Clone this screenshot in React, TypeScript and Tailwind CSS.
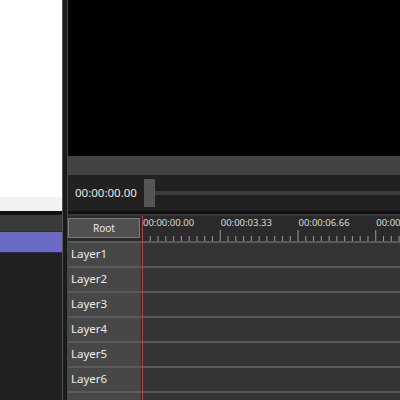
import React from "react";

const rows = ["Layer1", "Layer2", "Layer3", "Layer4", "Layer5", "Layer6", "Layer7", "Layer8"];
const labels = ["00:00:00.00", "00:00:03.33", "00:00:06.66", "00:00:09.99"];

function Ticks() {
  const ticks: React.ReactNode[] = [];
  const step = 77.75 / 10;
  for (let i = 0; i < 40; i++) {
    const x = 0.5 + i * step;
    const major = i % 10 === 0;
    ticks.push(
      <line key={i} x1={x} x2={x} y1={major ? 1 : 7} y2={12} stroke="#9a9a9a" strokeWidth={1} />
    );
  }
  return (
    <svg width="258" height="12" className="block">
      {ticks}
    </svg>
  );
}

export default function App() {
  return (
    <div className="w-[400px] h-[400px] flex overflow-hidden bg-[#1c1c1c] font-['Noto_Sans','Open_Sans',sans-serif]">
      <div className="w-[63px] shrink-0 flex flex-col border-r border-[#555555]">
        <div className="h-[197px] bg-white" />
        <div className="h-[14px] bg-[#f2f2f2]" />
        <div className="h-[4px] bg-[#121212]" />
        <div className="h-[16px] bg-[#3a3a3a]" />
        <div className="h-[22px] bg-[#6b6bc6] border-y border-[#2c2c44]" />
        <div className="flex-1 bg-[#202020]" />
      </div>
      <div className="w-[4px] shrink-0 bg-[#1a1a1a]" />
      <div className="flex-1 min-w-0 flex flex-col border-l border-[#4a4a4a] relative">
        <div className="h-[156px] shrink-0 bg-black" />
        <div className="h-[19px] shrink-0 bg-[#424242]" />
        <div className="h-[36px] shrink-0 bg-[#212121] flex items-center">
          <span className="ml-[7px] w-[69px] shrink-0 text-[11.5px] leading-none text-[#e6e6e6]">00:00:00.00</span>
          <div className="w-[11px] h-[28px] shrink-0 bg-[#555555]" />
          <div className="flex-1 h-[4px] bg-[#3c3c3c]" />
        </div>
        <div className="h-[3px] shrink-0 bg-[#111111]" />
        <div className="h-[2px] shrink-0 bg-[#3a3a3a]" />
        <div className="h-[25px] shrink-0 flex bg-[#2a2a2a]">
          <div className="w-[74px] shrink-0 pt-[2px]">
            <div className="w-[72px] h-[20px] bg-[#505050] border border-[#7a7a7a] flex items-center justify-center text-[10px] text-[#e8e8e8]">
              Root
            </div>
          </div>
          <div className="flex-1 min-w-0 flex flex-col overflow-hidden">
            <div className="h-[13px] flex whitespace-nowrap">
              {labels.map((l) => (
                <span key={l} className="w-[77.75px] shrink-0 pl-[1px] text-[9.5px] leading-[13px] text-[#dcdcdc]">
                  {l}
                </span>
              ))}
            </div>
            <Ticks />
          </div>
        </div>
        <div className="flex-1 flex flex-col overflow-hidden">
          {rows.map((r) => (
            <div key={r} className="h-[25px] shrink-0 flex border-t-2 border-[#5a5a5a]">
              <div className="w-[74px] shrink-0 bg-[#474747] border-r border-[#2a2a2a] flex items-center pl-[3px] pb-[1px] text-[11.5px] text-[#ececec]">
                {r}
              </div>
              <div className="flex-1 bg-[#343434]" />
            </div>
          ))}
        </div>
        <div className="absolute left-[74px] top-[216px] bottom-0 w-px bg-[#b8404f]" />
      </div>
    </div>
  );
}
